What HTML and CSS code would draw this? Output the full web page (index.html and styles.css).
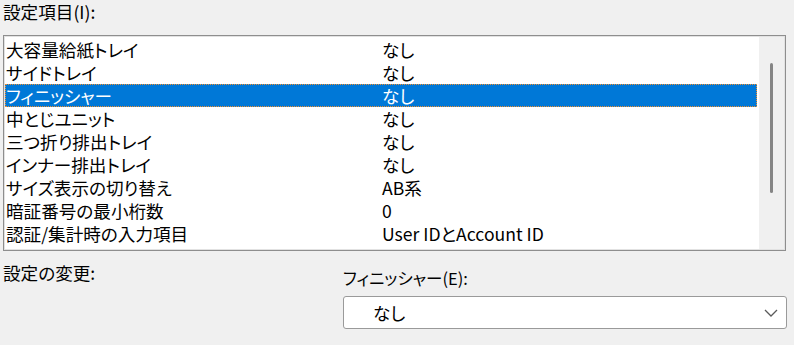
FILE: index.html
```html
<!DOCTYPE html>
<html lang="ja">
<head>
    <meta charset="UTF-8" />
    <title>設定項目</title>
    <link rel="stylesheet" href="styles.css">
</head>
<body>
    <div class="panel">
        <div class="field-label">設定項目(I):</div>
        <div class="list-box">
            <div class="list-rows">
                <div class="list-row"><span class="name">大容量給紙トレイ</span><span class="value">なし</span></div>
                <div class="list-row"><span class="name">サイドトレイ</span><span class="value">なし</span></div>
                <div class="list-row selected"><span class="name">フィニッシャー</span><span class="value">なし</span></div>
                <div class="list-row"><span class="name">中とじユニット</span><span class="value">なし</span></div>
                <div class="list-row"><span class="name">三つ折り排出トレイ</span><span class="value">なし</span></div>
                <div class="list-row"><span class="name">インナー排出トレイ</span><span class="value">なし</span></div>
                <div class="list-row"><span class="name">サイズ表示の切り替え</span><span class="value">AB系</span></div>
                <div class="list-row"><span class="name">暗証番号の最小桁数</span><span class="value">0</span></div>
                <div class="list-row"><span class="name">認証/集計時の入力項目</span><span class="value">User IDとAccount ID</span></div>
            </div>
            <div class="scroll-track">
                <div class="scroll-thumb"></div>
            </div>
        </div>

        <div class="change-area">
            <div class="change-label">設定の変更:</div>
            <div class="change-field">
                <div class="combo-label">フィニッシャー(E):</div>
                <div class="combo">
                    <span class="combo-text">なし</span>
                    <svg class="combo-arrow" width="14" height="8" viewBox="0 0 14 8">
                        <path d="M1 1 L7 7 L13 1" fill="none" stroke="#5a5a5a" stroke-width="1.3" />
                    </svg>
                </div>
            </div>
        </div>
    </div>
</body>
</html>
```

FILE: styles.css
```css
html {
    height: 100%;
}
body {
    margin: 0;
    padding: 0;
    background: #f0f0f0;
    color: #000;
    font-family: "Noto Sans CJK JP", "Noto Sans", sans-serif;
    font-size: 17.6px;
    font-feature-settings: "palt";
}
.panel {
    padding: 0 7px 0 3px;
}
.field-label {
    line-height: 24px;
    margin-bottom: 11px;
}
.list-box {
    display: flex;
    height: 216px;
    margin-right: 1px;
    box-sizing: border-box;
    border: 1px solid #8e8e8e;
    box-shadow: inset 0 0 0 1px #e2e2e2;
    background: #fff;
}
.list-rows {
    flex: 1;
    padding: 2px 2px 0 1px;
    overflow: hidden;
}
.list-row {
    display: flex;
    height: 23px;
    line-height: 23px;
    padding-left: 1px;
    white-space: nowrap;
}
.list-row .name {
    width: 376px;
}
.list-row.selected {
    background: #0078d7;
    color: #fff;
    outline: 1px dotted #f09030;
    outline-offset: -1px;
}
.scroll-track {
    width: 25px;
    padding-top: 26px;
    display: flex;
    justify-content: center;
    background: #f0f0f0;
    margin: 1px 1px 1px 0;
}
.scroll-thumb {
    width: 3px;
    height: 130px;
    background: #858585;
    border-radius: 2px;
}
.change-area {
    display: grid;
    grid-template-columns: 340px 1fr;
    margin-top: 11px;
}
.change-label {
    line-height: 22px;
}
.change-field {
    padding-top: 5px;
}
.combo-label {
    line-height: 22px;
    font-size: 16.5px;
}
.combo {
    display: flex;
    align-items: center;
    justify-content: space-between;
    height: 33px;
    margin-top: 7px;
    box-sizing: border-box;
    border: 1px solid #9a9a9a;
    border-radius: 3px;
    background: #fff;
    padding: 0 8px 0 29px;
}
```
